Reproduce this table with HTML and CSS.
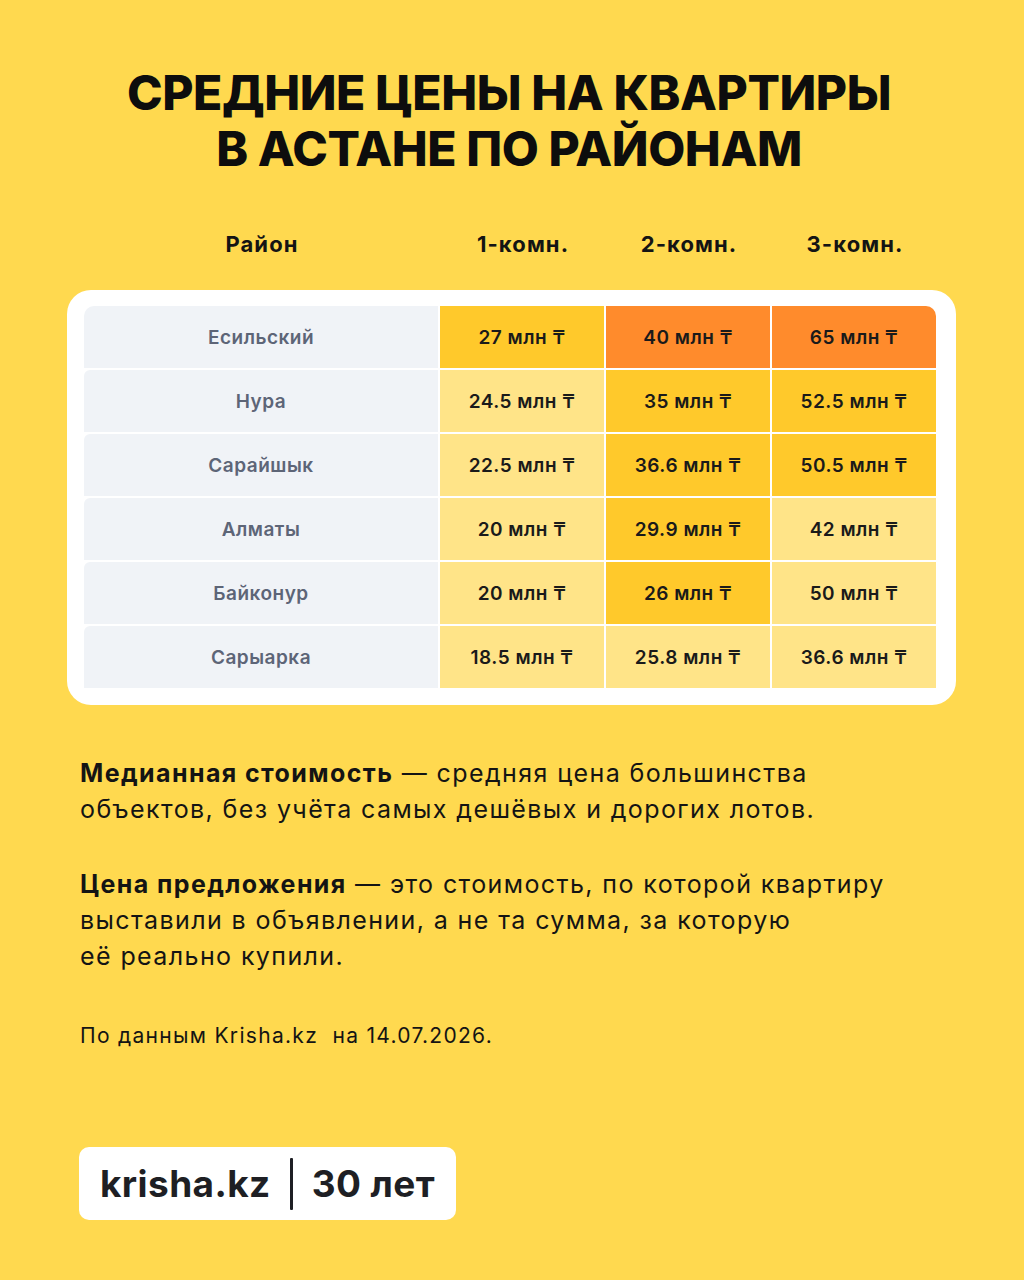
FILE: index.html
```html
<!DOCTYPE html>
<html lang="ru">
<head>
<meta charset="utf-8">
<link rel="stylesheet" href="styles.css">
</head>
<body>
<main class="page">
  <h1 class="title">СРЕДНИЕ ЦЕНЫ НА КВАРТИРЫ<br>В АСТАНЕ ПО РАЙОНАМ</h1>

  <div class="grid head">
    <div>Район</div>
    <div>1-комн.</div>
    <div>2-комн.</div>
    <div>3-комн.</div>
  </div>

  <section class="card">
    <div class="grid table">
      <div class="name first">Есильский</div>
      <div class="cell mid">27 млн ₸</div>
      <div class="cell hot">40 млн ₸</div>
      <div class="cell hot tr">65 млн ₸</div>

      <div class="name">Нура</div>
      <div class="cell light">24.5 млн ₸</div>
      <div class="cell mid">35 млн ₸</div>
      <div class="cell mid">52.5 млн ₸</div>

      <div class="name">Сарайшык</div>
      <div class="cell light">22.5 млн ₸</div>
      <div class="cell mid">36.6 млн ₸</div>
      <div class="cell mid">50.5 млн ₸</div>

      <div class="name">Алматы</div>
      <div class="cell light">20 млн ₸</div>
      <div class="cell mid">29.9 млн ₸</div>
      <div class="cell light">42 млн ₸</div>

      <div class="name">Байконур</div>
      <div class="cell light">20 млн ₸</div>
      <div class="cell mid">26 млн ₸</div>
      <div class="cell light">50 млн ₸</div>

      <div class="name">Сарыарка</div>
      <div class="cell light">18.5 млн ₸</div>
      <div class="cell light">25.8 млн ₸</div>
      <div class="cell light">36.6 млн ₸</div>
    </div>
  </section>

  <p class="text first-p"><b>Медианная стоимость</b> — средняя цена большинства<br>объектов, без учёта самых дешёвых и дорогих лотов.</p>
  <p class="text second-p"><b>Цена предложения</b> — это стоимость, по которой квартиру<br>выставили в объявлении, а не та сумма, за которую<br>её реально купили.</p>

  <p class="note">По данным Krisha.kz&nbsp; на 14.07.2026.</p>

  <div class="logo">
    <span class="brand">krisha.kz</span>
    <span class="divider"></span>
    <span class="years">30 лет</span>
  </div>
</main>
</body>
</html>
```

FILE: styles.css
```css
html, body {
  margin: 0;
  padding: 0;
}
body {
  background: #ffd94f;
  font-family: Inter, "Noto Sans", "DejaVu Sans", sans-serif;
  color: #141414;
  width: 1024px;
  height: 1280px;
  overflow: hidden;
}
.page {
  padding: 65px 0 0 0;
}
.title {
  margin: 0 0 0 -6px;
  text-align: center;
  font-size: 48px;
  line-height: 56px;
  font-weight: 800;
  letter-spacing: -0.4px;
  color: #0d0d0d;
}
.grid {
  display: grid;
  grid-template-columns: 354px 164px 164px 164px;
  column-gap: 2px;
}
.head {
  margin: 52px 0 0 85px;
  width: 852px;
  font-size: 22px;
  line-height: 30px;
  font-weight: 700;
  letter-spacing: 1.1px;
  text-align: center;
  color: #141414;
}
.card {
  margin: 31px 0 0 67px;
  width: 855px;
  padding: 16px 17px 17px 17px;
  background: #fff;
  border-radius: 24px;
}
.table {
  row-gap: 2px;
}
.table > div {
  height: 62px;
  display: flex;
  align-items: center;
  justify-content: center;
  font-size: 19px;
  font-weight: 600;
  letter-spacing: 0.5px;
}
.name {
  background: #f0f3f7;
  color: #5d6577;
  border-radius: 6px 0 0 0;
}
.name.first {
  border-radius: 10px 0 0 0;
}
.cell {
  color: #1a1a1a;
}
.tr {
  border-radius: 0 10px 0 0;
}
.light { background: #ffe488; }
.mid { background: #ffc92b; }
.hot { background: #ff8b2c; }

.text {
  margin: 0 0 0 80px;
  font-size: 25px;
  line-height: 36px;
  font-weight: 400;
  letter-spacing: 1.4px;
  color: #141414;
}
.text b {
  font-weight: 700;
}
.first-p {
  margin-top: 50px;
}
.second-p {
  margin-top: 39px;
}
.note {
  margin: 48px 0 0 80px;
  font-size: 21px;
  line-height: 28px;
  letter-spacing: 1.3px;
  color: #141414;
}
.logo {
  margin: 97px 0 0 79px;
  width: 377px;
  height: 73px;
  box-sizing: border-box;
  background: #fff;
  border-radius: 10px;
  display: flex;
  align-items: center;
  padding-left: 21px;
  gap: 19px;
  color: #1e1f24;
}
.brand, .years {
  font-size: 37px;
  font-weight: 700;
  letter-spacing: 0.4px;
  line-height: 1;
}
.divider {
  width: 3px;
  height: 52px;
  background: #1e1f24;
  border-radius: 1px;
}
```
